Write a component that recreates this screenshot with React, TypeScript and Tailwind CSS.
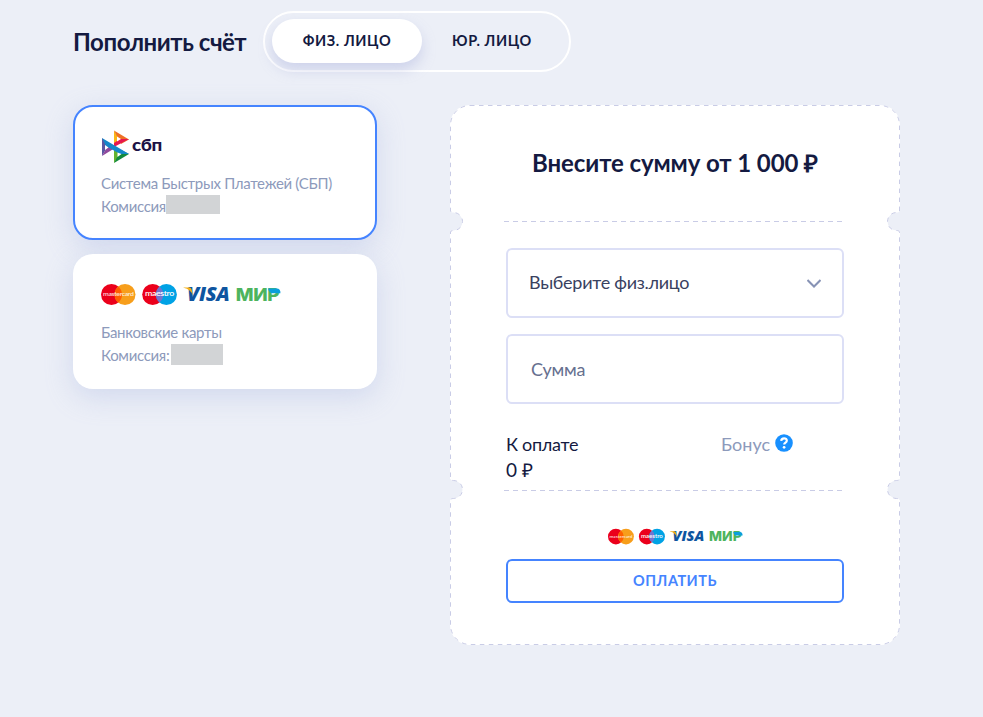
import React from "react";

interface CardLogosProps {
  width: number;
  height: number;
}

const CardLogos: React.FC<CardLogosProps> = ({ width, height }) => (
  <svg width={width} height={height} viewBox="0 0 180 21" className="block shrink-0 overflow-visible">
    <circle cx="10.5" cy="10.5" r="10.5" fill="#eb001b" />
    <circle cx="24" cy="10.5" r="10.5" fill="#f79e1b" />
    <path d="M17.25 2.45a10.5 10.5 0 0 1 0 16.1a10.5 10.5 0 0 1 0-16.1z" fill="#ff5f00" />
    <text x="2" y="12.3" textLength="30.5" lengthAdjust="spacingAndGlyphs" fontSize="6" fontWeight="600" fill="#fff" fillOpacity=".85">mastercard</text>
    <circle cx="51.7" cy="10.5" r="10.5" fill="#eb001b" />
    <circle cx="65.4" cy="10.5" r="10.5" fill="#00a2e5" />
    <path d="M58.55 2.55a10.5 10.5 0 0 1 0 15.9a10.5 10.5 0 0 1 0-15.9z" fill="#7375cf" />
    <text x="44" y="12.2" textLength="29" lengthAdjust="spacingAndGlyphs" fontSize="6.6" fontWeight="600" fill="#fff">maestro</text>
    <text x="86" y="16.8" textLength="42.5" lengthAdjust="spacingAndGlyphs" className="font-['Open_Sans']" fontSize="18.5" fontWeight="800" fontStyle="italic" fill="#0e55a0">VISA</text>
    <path d="M82.5 3.4h5.3c1.5 0 2.400.6 2.800 2l1.500 6.200C90.600 7.500 87.500 4.800 82.500 3.800z" fill="#f2ae14" />
    <text x="134.7" y="16.8" textLength="43.5" lengthAdjust="spacingAndGlyphs" className="font-['Inter']" fontSize="16.8" fontWeight="800" fill="#4db45e">МИР</text>
    <path d="M167 4.400h8.500c2.800 0 4.300 2 3.900 4.900h-7.400c-2.600 0-4.500-1.900-5-4.900z" fill="#0b9fdc" />
  </svg>
);

const SbpLogo: React.FC = () => (
  <svg width="62" height="34" viewBox="0 0 62 34" className="block">
    <path d="M1 8v18l6.500-11z" fill="#5b57a2" />
    <path d="M1 26l6.500-11.500L14 18z" fill="#90499d" />
    <path d="M13 .5v15.500l7-4.500z" fill="#fab718" />
    <path d="M13 .5l15 9-8 4.500z" fill="#ee7025" />
    <path d="M13 17l15-8h-9l-6 4z" fill="#e6174f" />
    <path d="M13 33V18.500l8 3.500z" fill="#63b22f" />
    <path d="M13 33l15-9-8-4z" fill="#128a3e" />
    <path d="M1 8l27 16h-9L5 16z" fill="#1487c9" />
    <path d="M4 15v5l3.500-2.500zM16 6.500v5l4-2.500zM16.500 22.500V27l4-3z" fill="#fff" />
    <text x="31" y="20.500" textLength="30" lengthAdjust="spacingAndGlyphs" fontSize="17" fontWeight="900" fill="#1d1346">сбп</text>
  </svg>
);

// Dashed ticket edge with two pairs of punched notches
const TicketOutline: React.FC = () => (
  <svg width="450" height="540" viewBox="0 0 450 540" className="absolute inset-0" fill="none">
    {[116.5, 384.5].map((y) => (
      <g key={y} transform={`translate(0 ${y})`} fill="#eceff7">
        <path d="M-1-10.5H.5c.5 1.300 1.500 1.500 3 1.500a9 9 0 0 1 0 18c-1.500 0-2.500.2-3 1.500H-1z" />
        <path d="M451-10.500h-1.500c-.5 1.300-1.500 1.500-3 1.500a9 9 0 0 0 0 18c1.500 0 2.500.2 3 1.500h1.500z" />
      </g>
    ))}
    <path
      d="M20 .5H430A19.500 19.500 0 0 1 449.500 20V106c-.5 1.300-1.500 1.500-3 1.500a9 9 0 0 0 0 18c1.500 0 2.500.2 3 1.500V374c-.5 1.300-1.500 1.500-3 1.500a9 9 0 0 0 0 18c1.500 0 2.500.2 3 1.500V520A19.500 19.500 0 0 1 430 539.500H20A19.500 19.500 0 0 1 .5 520V395c.5-1.300 1.500-1.500 3-1.500a9 9 0 0 0 0-18c-1.500 0-2.500-.2-3-1.500V127c.5-1.300 1.500-1.500 3-1.500a9 9 0 0 0 0-18c-1.500 0-2.500-.2-3-1.500V20A19.500 19.500 0 0 1 20 .5z"
      stroke="#c9cce6"
      strokeDasharray="4.500 4.500"
    />
  </svg>
);

const Divider: React.FC = () => (
  <div className="-ml-0.5 h-px w-[338px] bg-[repeating-linear-gradient(90deg,#c9cce6_0_5px,transparent_5px_9px)]" />
);

export default function App() {
  return (
    <div className="h-[717px] w-[983px] overflow-hidden bg-[#eceff7] pl-[73px] pt-[11px] font-['Lato','Open_Sans',sans-serif] text-[#141a41]">
      <header className="flex h-[61px] items-center gap-[17px]">
        <h1 className="w-[173px] whitespace-nowrap pt-px text-[24px] font-bold tracking-[-0.45px]">Пополнить счёт</h1>
        <div className="flex h-[61px] w-[308px] items-center rounded-full border-2 border-white pl-[7px] text-[14.5px] font-bold tracking-[0.6px]">
          <button className="h-11 w-[150px] -translate-y-px rounded-full bg-white shadow-[0_7px_14px_rgba(150,158,212,0.35)]">ФИЗ. ЛИЦО</button>
          <button className="h-11 w-[140px] -translate-y-px">ЮР. ЛИЦО</button>
        </div>
      </header>

      <main className="mt-[33px] flex items-start gap-[73px]">
        <section className="flex w-[304px] flex-col gap-3.5 text-[15px] leading-[22.5px] tracking-[-0.31px] text-[#8d9abb]">
          <div className="h-[135px] rounded-[20px] border-2 border-[#4584ff] bg-white pl-[26px] pt-[23px] shadow-[0_8px_28px_rgba(150,165,220,0.3)]">
            <SbpLogo />
            <p className="mt-2 whitespace-nowrap">Система Быстрых Платежей (СБП)</p>
            <div className="flex">
              <span className="w-[65px] whitespace-nowrap">Комиссия</span>
              <span className="h-[19px] w-[54px] bg-[#d2d4d6]" />
            </div>
          </div>
          <div className="h-[135px] rounded-[20px] bg-white pl-7 pt-[30px] shadow-[0_8px_28px_rgba(150,165,220,0.3)]">
            <CardLogos width={180} height={21} />
            <p className="mt-4 whitespace-nowrap">Банковские карты</p>
            <div className="flex">
              <span className="w-[70px] whitespace-nowrap">Комиссия:</span>
              <span className="h-[21px] w-[52px] bg-[#d2d4d6]" />
            </div>
          </div>
        </section>

        <section className="relative h-[540px] w-[450px] rounded-[20px] bg-white">
          <TicketOutline />
          <div className="flex h-full flex-col px-14">
            <h2 className="flex h-[116px] items-center justify-center whitespace-nowrap text-[24px] font-bold tracking-[-0.1px]">
              Внесите сумму от 1 000 ₽
            </h2>
            <Divider />
            <div className="mt-[26px] flex h-[70px] items-center justify-between rounded-md border-2 border-[#dcdff6] pl-[21px] pr-[21px] text-[18px] tracking-[-0.28px] text-[#39415f]">
              <span className="-mt-0.5">Выберите физ.лицо</span>
              <svg width="14" height="9" viewBox="0 0 14 9" fill="none" stroke="#8793b5" strokeWidth="2">
                <path d="M.5 1L7 7.500 13.500 1" />
              </svg>
            </div>
            <div className="mt-4 flex h-[70px] items-center rounded-md border-2 border-[#dcdff6] pl-[23px] text-[18px] tracking-[-0.2px] text-[#66708f]">
              Сумма
            </div>
            <div className="mt-[27px] flex h-[59px] text-[18px] leading-[26px] tracking-[-0.3px]">
              <div className="w-[215px]">
                <p>К оплате</p>
                <p className="text-[19px] tracking-normal">0 ₽</p>
              </div>
              <div className="flex h-[26px] gap-[3px] text-[#8d9abb]">
                <span className="w-[51px] whitespace-nowrap tracking-normal">Бонус</span>
                <svg width="18" height="18" viewBox="0 0 18 18" className="mt-[3px]">
                  <circle cx="9" cy="9" r="8.800" fill="#1890ff" />
                  <path d="M6.200 6.900C6.400 3.400 12 3.500 11.800 6.800c-.1 1.900-2.600 1.800-2.600 3.800" fill="none" stroke="#fff" strokeWidth="2.200" />
                  <circle cx="9.100" cy="13.300" r="1.350" fill="#fff" />
                </svg>
              </div>
            </div>
            <Divider />
            <div className="mt-[37px] flex justify-center">
              <CardLogos width={135} height={17} />
            </div>
            <button className="mt-[14px] h-11 rounded-md border-2 border-[#4584ff] text-[14.5px] font-bold tracking-[0.5px] text-[#4584ff]">
              ОПЛАТИТЬ
            </button>
          </div>
        </section>
      </main>
    </div>
  );
}
